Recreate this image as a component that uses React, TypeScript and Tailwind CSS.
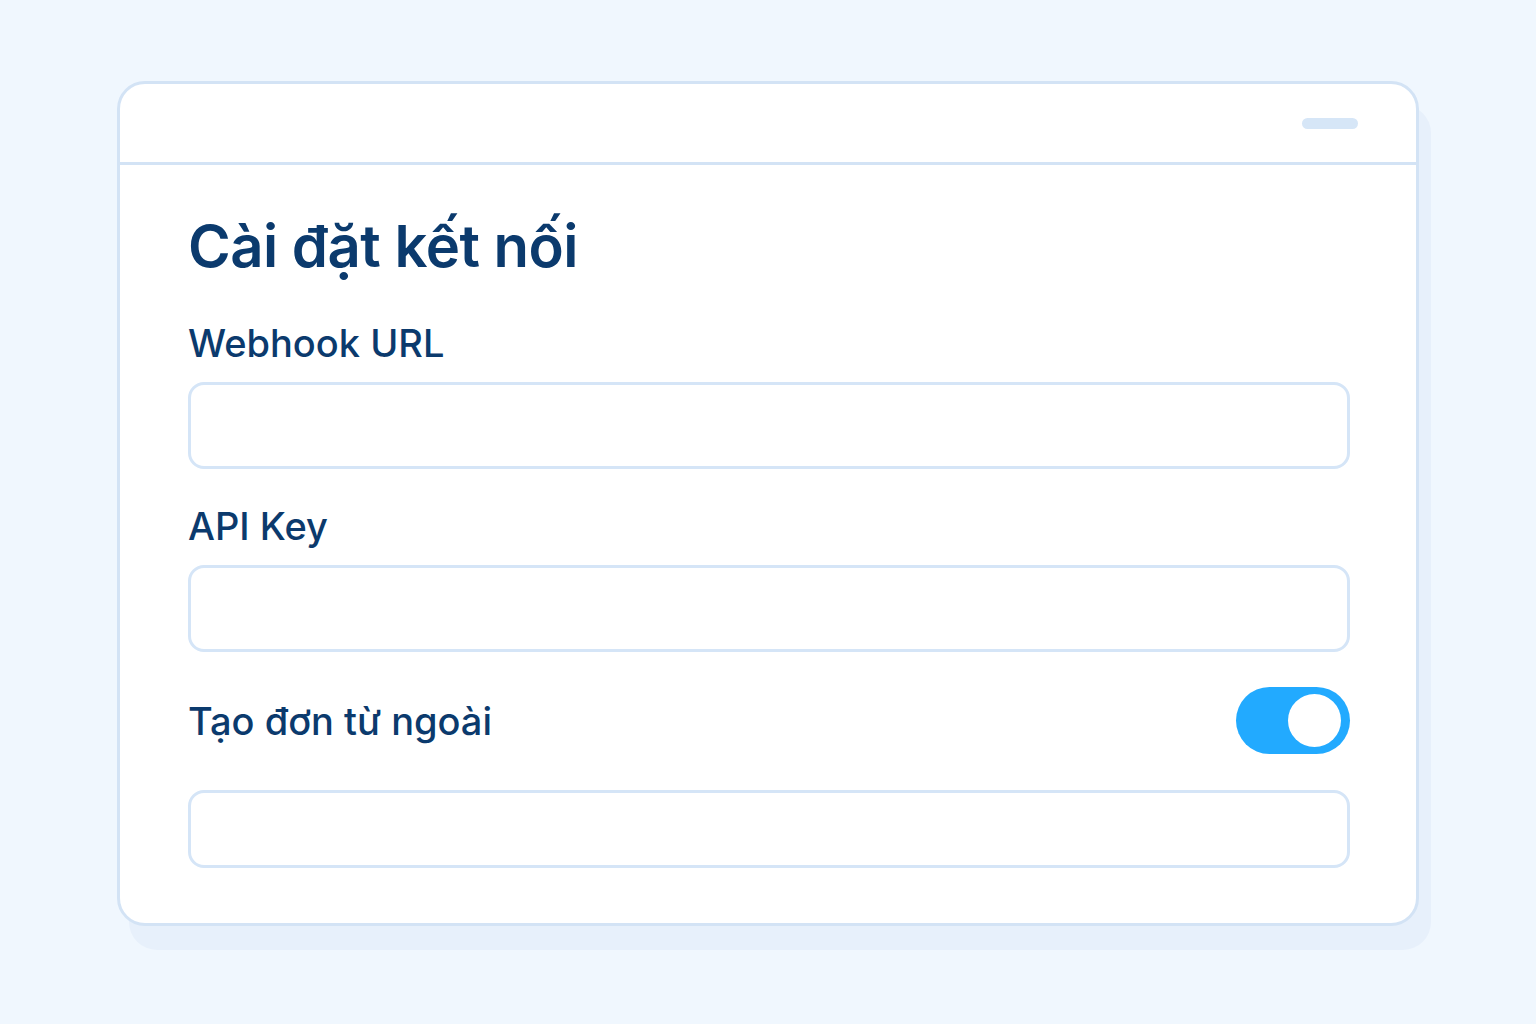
import { useState } from "react"

const font = { fontFamily: "Inter, 'Noto Sans', sans-serif" }

function Field({ label, last }: { label: string; last?: boolean }) {
  return (
    <div className={last ? "" : "mb-[38px]"}>
      <label className="mb-[20px] block text-[38px] font-medium leading-none text-[#0b3a6d]">
        {label}
      </label>
      <input className="block h-[87px] w-full rounded-[16px] border-[3px] border-[#d5e5f7] bg-white px-5 text-[28px] text-[#0b3a6d] outline-none" />
    </div>
  )
}

function Toggle({ on, onChange }: { on: boolean; onChange: (v: boolean) => void }) {
  return (
    <button
      type="button"
      onClick={() => onChange(!on)}
      className={
        "flex h-[67px] w-[114px] items-center rounded-full px-[9px] " +
        (on ? "justify-end bg-[#22aaff]" : "justify-start bg-[#d5e5f7]")
      }
    >
      <span className="block h-[53px] w-[53px] rounded-full bg-white" />
    </button>
  )
}

export default function App() {
  const [external, setExternal] = useState(true)

  return (
    <div className="min-h-[1024px] w-full bg-[#f0f7fe] pt-[81px]" style={font}>
      <div className="mx-auto w-[1302px] overflow-hidden rounded-[28px] border-[3px] border-[#d3e3f5] bg-white shadow-[12px_24px_0_0_#e7f0fb]">
        <div className="flex h-[81px] items-center justify-end border-b-[3px] border-[#d3e3f5] pr-[58px]">
          <div className="h-[11px] w-[56px] rounded-full bg-[#d6e6f7]" />
        </div>

        <div className="pb-[55px] pl-[68px] pr-[66px] pt-[52px]">
          <h1 className="mb-[49px] text-[58px] font-semibold leading-none tracking-[-0.5px] text-[#0b3a6d]">
            Cài đặt kết nối
          </h1>

          <Field label="Webhook URL" />
          <Field label="API Key" last />

          <div className="mb-[36px] mt-[35px] flex items-center justify-between">
            <span className="text-[38px] font-medium leading-none text-[#0b3a6d]">
              Tạo đơn từ ngoài
            </span>
            <Toggle on={external} onChange={setExternal} />
          </div>

          <input className="block h-[78px] w-full rounded-[16px] border-[3px] border-[#d5e5f7] bg-white px-5 text-[28px] text-[#0b3a6d] outline-none" />
        </div>
      </div>
    </div>
  )
}
